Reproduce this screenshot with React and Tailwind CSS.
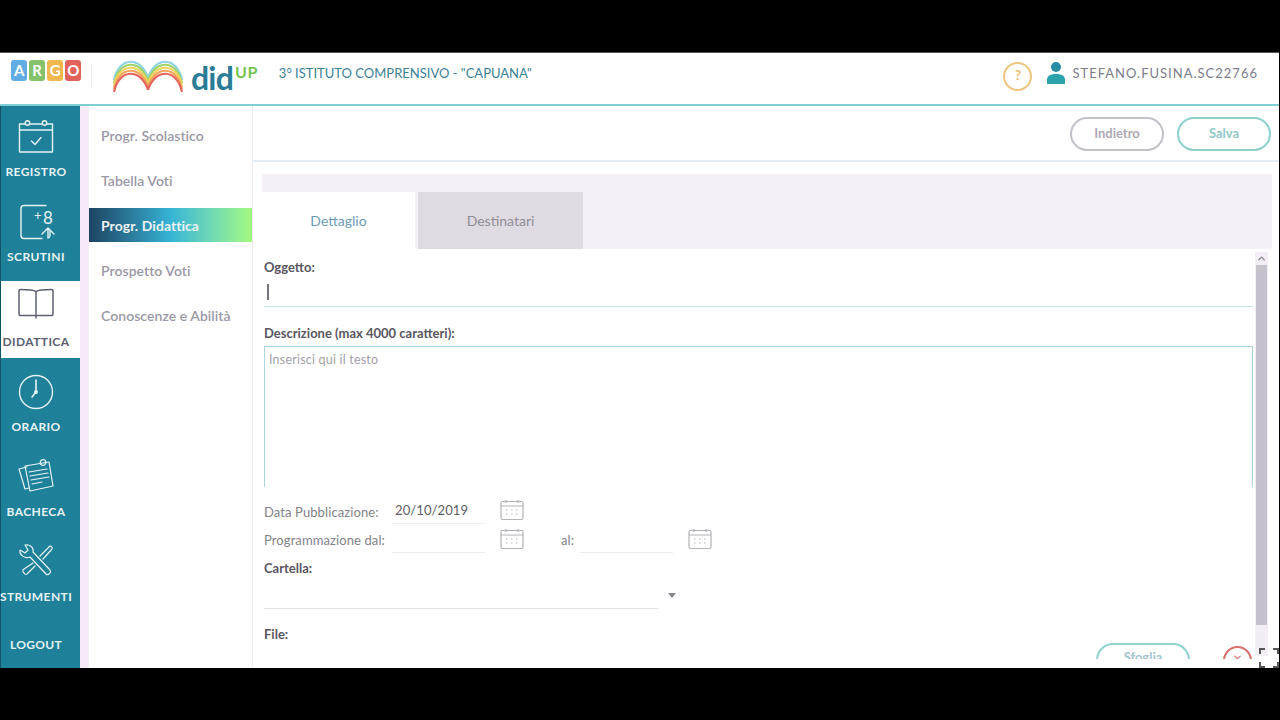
import { ChevronUp } from 'lucide-react';

const stroke = { fill: 'none', stroke: 'currentColor', strokeWidth: 1.4, strokeLinecap: 'round', strokeLinejoin: 'round' };

function RegistroIcon() {
  return (
    <svg width="36" height="36" viewBox="0 0 36 36" {...stroke}>
      <path d="M12 5h12M7 5H1.500v28h33V5H29" />
      <circle cx="9.500" cy="4" r="2.200" />
      <circle cx="26.500" cy="4" r="2.200" />
      <path d="M1.500 11h33" />
      <path d="M13.500 22l3.500 3.500 6-7" />
    </svg>
  );
}

function ScrutiniIcon() {
  return (
    <svg width="36" height="36" viewBox="0 0 36 36" {...stroke} className="ml-[1px]">
      <path d="M27 1.500H5a3 3 0 0 0-3 3v27a3 3 0 0 0 3 3h18M31 27v4.500a3 3 0 0 1-1 2" />
      <text x="15" y="16" fontSize="13" fill="currentColor" stroke="none" fontFamily="Lato">+</text>
      <text x="24" y="20" fontSize="17" fill="currentColor" stroke="none" fontFamily="Lato">8</text>
      <path d="M23 30l6-6 6 6M29 24v10" />
    </svg>
  );
}

function DidatticaIcon() {
  return (
    <svg width="36" height="32" viewBox="0 0 36 32" {...stroke} strokeWidth="1.500" className="mb-[6px]">
      <path d="M18 3.500C15 1.500 7 1.500 2.500 1.500a1.500 1.500 0 0 0-1.500 1.500v23a1.500 1.500 0 0 0 1.500 1.500H18h15.500a1.500 1.500 0 0 0 1.500-1.500V3a1.500 1.500 0 0 0-1.500-1.500C29 1.500 21 1.500 18 3.500z" />
      <path d="M18 3.500V30" />
    </svg>
  );
}

function OrarioIcon() {
  return (
    <svg width="36" height="36" viewBox="0 0 36 36" {...stroke}>
      <circle cx="18" cy="18" r="16.500" />
      <path d="M18 6v12l-4 5" strokeWidth="1.600" />
      <circle cx="18" cy="18" r="1.200" fill="currentColor" />
    </svg>
  );
}

function BachecaIcon() {
  return (
    <svg width="36" height="34" viewBox="0 0 36 34" {...stroke} strokeWidth="1.200" className="mb-[2px]">
      <path d="M9 8L1 10l6 20 4-1" />
      <path d="M7 7l24-4 4 24-23 5z" />
      <path d="M11 13l18-3M12 17l18-3M13 21l18-3M14 25l10-2" />
      <circle cx="25" cy="3.500" r="2.800" />
    </svg>
  );
}

function StrumentiIcon() {
  return (
    <svg width="36" height="34" viewBox="0 0 36 34" {...stroke} strokeWidth="1.200" className="mb-[4px]">
      <path d="M2 7l5 3 3-3-3-5c4-1 9 2 8 7l17 18c2 2-2 6-4 4L12 14c-5 2-11-2-10-7z" />
      <path d="M22 13l9-9c1-2 4 0 3 2l-9 10" />
      <path d="M15 20L6 26c-2 1-1 3 0 4 1 2 3 2 4 0l7-7" />
    </svg>
  );
}

function CalendarIcon() {
  return (
    <svg width="24" height="22" viewBox="0 0 24 22" className="text-[#b5b1ba] mb-[4px]" fill="none" stroke="currentColor" strokeWidth="1.200">
      <rect x="1" y="2.500" width="22" height="18" rx="1.500" />
      <path d="M1 7h22M6 1v3M18 1v3" />
      <path d="M6 11h2M11 11h2M16 11h2M6 15h2M11 15h2M16 15h2" strokeDasharray="1.500 1" />
    </svg>
  );
}

function RainbowLogo() {
  // same double hump, repeated a little lower for every colour
  const arcs = [
    ['#8fd3e8', 0],
    ['#9ed36a', 3],
    ['#f4d35e', 6],
    ['#f2a65a', 9],
    ['#e4665f', 12],
  ];
  return (
    <svg width="70" height="34" viewBox="0 0 70 34" fill="none" strokeWidth="2.200" className="mb-[4px]">
      {arcs.map(([color, d]) => (
        <g key={color} stroke={color}>
          <path d={`M1 ${20 + d}C6 ${-4 + d} 28 ${-4 + d} 35 ${18 + d}`} />
          <path d={`M69 ${20 + d}C64 ${-4 + d} 42 ${-4 + d} 35 ${18 + d}`} />
        </g>
      ))}
    </svg>
  );
}

const navItems = [
  { label: 'REGISTRO', Icon: RegistroIcon },
  { label: 'SCRUTINI', Icon: ScrutiniIcon },
  { label: 'DIDATTICA', Icon: DidatticaIcon, active: true },
  { label: 'ORARIO', Icon: OrarioIcon },
  { label: 'BACHECA', Icon: BachecaIcon },
  { label: 'STRUMENTI', Icon: StrumentiIcon },
];

const subItems = ['Progr. Scolastico', 'Tabella Voti', 'Progr. Didattica', 'Prospetto Voti', 'Conoscenze e Abilità'];

function Header() {
  return (
    <header className="h-[53px] shrink-0 flex items-center justify-between border-b-2 border-[#7fd0d4] pl-[11px] pr-[21px]">
      <div className="flex items-center">
        <div className="flex gap-[2px] mb-[16px] text-white text-[15px] font-bold tracking-tight">
          <span className="w-[16px] h-[21px] rounded-[3px] bg-[#62aee4] flex items-center justify-center">A</span>
          <span className="w-[16px] h-[21px] rounded-[3px] bg-[#86c16c] flex items-center justify-center">R</span>
          <span className="w-[16px] h-[21px] rounded-[3px] bg-[#f1b84f] flex items-center justify-center">G</span>
          <span className="w-[16px] h-[21px] rounded-[3px] bg-[#e2625c] flex items-center justify-center">O</span>
        </div>
        <div className="w-px h-[22px] mb-[6px] bg-[#eeeeee] ml-[10px] mr-[21px]" />
        <RainbowLogo />
        <div className="flex items-start ml-[8px] h-[38px]">
          <span className="text-[32px] leading-[36px] font-bold text-[#2b7c96] tracking-tight">did</span>
          <span className="text-[16px] leading-[20px] font-bold text-[#74c44c] ml-[2px] mt-[2px] tracking-[0.5px]">UP</span>
        </div>
        <span className="ml-[21px] mb-[10px] text-[13px] text-[#3c8296]">3° ISTITUTO COMPRENSIVO - "CAPUANA"</span>
      </div>
      <div className="flex items-center">
        <span className="w-[29px] h-[29px] rounded-full border-2 border-[#efc680] flex items-center justify-center text-[13px] font-bold text-[#efb968] mb-[5px]">?</span>
        <svg width="18" height="22" viewBox="0 0 18 22" className="ml-[15px] mb-[12px]">
          <circle cx="9" cy="5" r="5" fill="#2a8ea3" />
          <path d="M0 22v-4c0-4 3-6 9-6s9 2 9 6v4z" fill="#2aa3ad" />
        </svg>
        <span className="ml-[7px] mb-[10px] text-[13px] text-[#7d7c8b] tracking-[1px]">STEFANO.FUSINA.SC22766</span>
      </div>
    </header>
  );
}

function Sidebar() {
  return (
    <aside className="w-[80px] shrink-0 bg-[#1f8099] border-l border-[#0f5468] flex flex-col pt-[5px] text-[#e6f3f6]">
      {navItems.map(({ label, Icon, active }) => (
        <div
          key={label}
          className={`h-[77px] mb-[8px] pr-[9px] flex flex-col items-center ${active ? 'bg-white text-[#5c6072]' : ''}`}
        >
          <div className="h-[44px] mt-[4px] flex items-center justify-center">
            <Icon />
          </div>
          <span className="mt-[5px] text-[12px] leading-[16px] font-bold tracking-[0.4px] whitespace-nowrap">{label}</span>
        </div>
      ))}
      <span className="mt-[16px] pr-[9px] text-center text-[12px] leading-[16px] font-bold tracking-[0.3px]">LOGOUT</span>
    </aside>
  );
}

function SubMenu() {
  return (
    <nav className="w-[173px] shrink-0 border-r border-[#f0ebf3] bg-white border-l-[9px] border-l-[#f6ecf8] flex flex-col pt-[12px] gap-[11px]">
      {subItems.map((item, i) => (
        <div
          key={item}
          className={`h-[34px] pl-[12px] flex items-center text-[14px] tracking-[0.05px] ${
            i === 2
              ? 'font-bold text-[#eef2f5] tracking-[-0.2px] bg-gradient-to-r from-[#1d4462] via-[#36b4d6] to-[#a3fa7e]'
              : 'font-semibold text-[#9a98a6]'
          }`}
        >
          {item}
        </div>
      ))}
    </nav>
  );
}

function Field({ width, value }) {
  return (
    <div className={`${width} h-[23px] border-b border-[#eeeaf0] pl-[3px] text-[13px] leading-[19px] text-[#5d5d66]`}>
      {value}
    </div>
  );
}

function Form() {
  return (
    <div className="flex-1 min-w-0 h-[410px] overflow-hidden pl-[2px]">
      <div className="w-[989px]">
        <div className="pt-[10px] text-[13px] leading-[16px] font-bold text-[#59565f]">Oggetto:</div>
        <div className="h-[31px] border-b border-[#c8e8ec] flex items-center pl-[3px] mt-[1px] pt-[2px]">
          <span className="w-[1.500px] h-[16px] bg-[#77757d]" />
        </div>
        <div className="mt-[18px] text-[13px] leading-[16px] font-bold text-[#59565f]">Descrizione (max 4000 caratteri):</div>
        <div className="mt-[5px] h-[141px] border-t border-x border-[#a9d6db] pl-[4px] pt-[5px] text-[12.500px] leading-[16px] text-[#a3a1aa] tracking-[0.2px]">
          Inserisci qui il testo
        </div>
        <div className="mt-[13px] flex items-center h-[24px] text-[13px] text-[#84828a] tracking-[0.1px]">
          <span className="w-[128px] pt-[1px]">Data Pubblicazione:</span>
          <Field width="w-[93px]" value="20/10/2019" />
          <span className="ml-[15px]"><CalendarIcon /></span>
        </div>
        <div className="mt-[5px] flex items-center h-[24px] text-[13px] text-[#84828a] tracking-[0.1px]">
          <span className="w-[128px]">Programmazione dal:</span>
          <Field width="w-[93px]" />
          <span className="ml-[15px]"><CalendarIcon /></span>
          <span className="ml-[37px] w-[19px]">al:</span>
          <Field width="w-[93px]" />
          <span className="ml-[15px]"><CalendarIcon /></span>
        </div>
        <div className="mt-[7px] text-[13px] leading-[16px] font-bold text-[#59565f]">Cartella:</div>
        <div className="flex items-center">
          <div className="w-[394px] h-[33px] border-b border-[#e4e2e6]" />
          <span className="ml-[10px] mt-[5px] w-0 h-0 border-x-[4.500px] border-x-transparent border-t-[5px] border-t-[#85838c]" />
        </div>
        <div className="mt-[17px] text-[13px] leading-[16px] font-bold text-[#59565f]">File:</div>
        <div className="flex items-start mt-[1px]">
          <button className="ml-[832px] w-[94px] h-[34px] pb-[4px] rounded-[18px] border-2 border-[#8fd2cf] text-[13px] font-bold text-[#a3c5cf]">Sfoglia</button>
          <span className="ml-[33px] mt-[3px] w-[29px] h-[29px] pb-[6px] rounded-full border-2 border-[#d9706f] text-[#d9706f] flex items-center justify-center text-[16px] leading-none">×</span>
        </div>
      </div>
    </div>
  );
}

function Scrollbar() {
  return (
    <div className="w-[13px] h-[404px] mt-[3px] ml-[1px] bg-[#f3edf6] flex flex-col items-center">
      <ChevronUp size={11} strokeWidth={3} className="text-[#8a8a90] mt-[1px]" />
      <div className="w-[11px] h-[360px] mt-[1px] bg-[#c6c2cb]" />
    </div>
  );
}

function Content() {
  return (
    <main className="flex-1 min-w-0 flex flex-col">
      <div className="h-[56px] shrink-0 border-b-2 border-[#e3edf5] flex items-start justify-end gap-[13px] pt-[11px] pr-[8px]">
        <button className="w-[94px] h-[34px] rounded-full border-2 border-[#c4c0c9] text-[13px] font-bold text-[#aeaab4]">Indietro</button>
        <button className="w-[94px] h-[34px] rounded-full border-2 border-[#8ed0cb] text-[13px] font-bold text-[#8fc8c6]">Salva</button>
      </div>
      <div className="ml-[9px] mr-[7px] mt-[12px] shrink-0">
        <div className="h-[18px] bg-[#f5eff7]" />
        <div className="h-[57px] bg-[#f5eff7] flex">
          <div className="w-[153px] bg-white flex items-center justify-center text-[14px] text-[#6b9cb8]">Dettaglio</div>
          <div className="w-[165px] ml-[3px] bg-[#e0dbe2] flex items-center justify-center text-[14px] text-[#8f8d98]">Destinatari</div>
        </div>
      </div>
      <div className="flex-1 min-h-0 flex ml-[9px]">
        <Form />
        <Scrollbar />
        <div className="w-[11px] shrink-0" />
      </div>
    </main>
  );
}

export default function App() {
  return (
    <div className="w-[1280px] h-[720px] bg-black overflow-hidden font-['Lato',sans-serif] py-[52px] pr-[1px]">
      <div className="h-full bg-white border-t border-[#555] flex flex-col relative">
        <Header />
        <div className="flex-1 min-h-0 flex">
          <Sidebar />
          <SubMenu />
          <Content />
        </div>
        {/* fullscreen toggle of the video player */}
        <svg width="20" height="20" viewBox="0 0 20 20" className="absolute right-0 bottom-0 text-[#55555a]" fill="none" stroke="currentColor" strokeWidth="2">
          <path d="M1 6V1h5M14 1h5v5M1 14v5h5M14 19h5v-5" />
        </svg>
      </div>
    </div>
  );
}
